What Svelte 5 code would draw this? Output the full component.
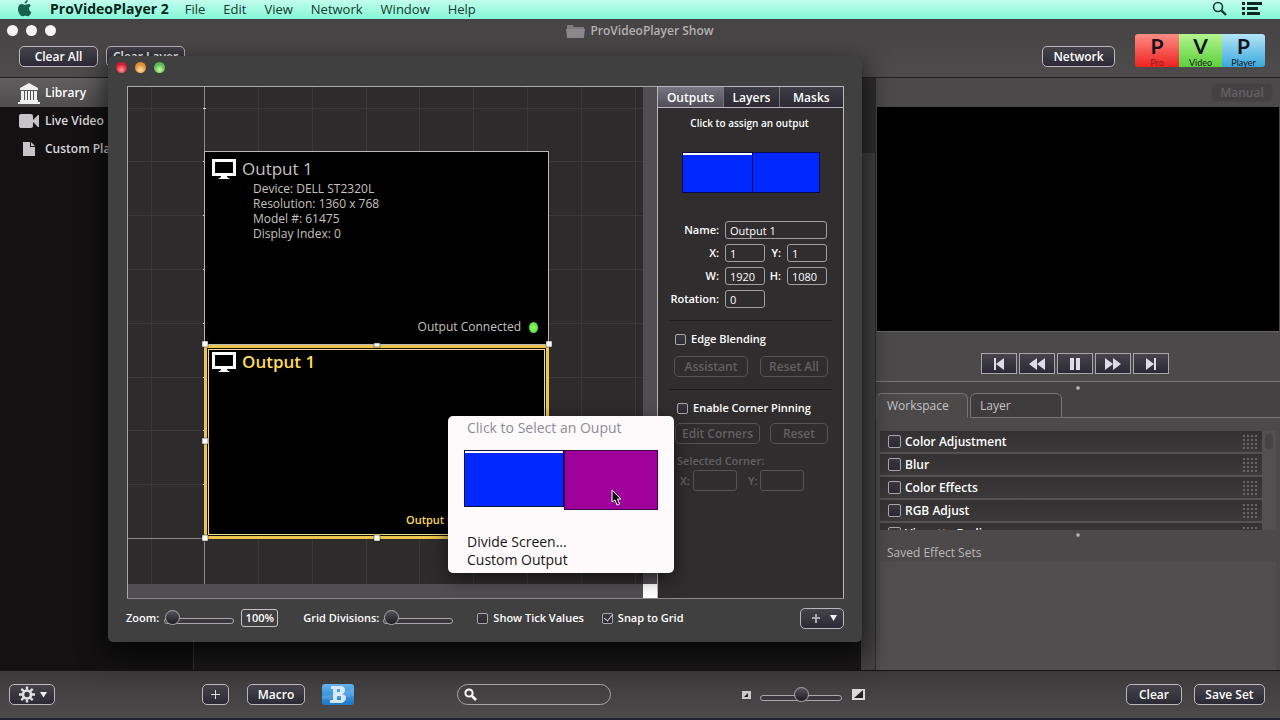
<script>
  const menus = ['File', 'Edit', 'View', 'Network', 'Window', 'Help'];
  const effects = ['Color Adjustment', 'Blur', 'Color Effects', 'RGB Adjust', 'Vignette Radius'];
  const logo = [
    { letter: 'P', word: 'Pro', tone: 'red' },
    { letter: 'V', word: 'Video', tone: 'green' },
    { letter: 'P', word: 'Player', tone: 'blue' }
  ];
  const details = ['Device: DELL ST2320L', 'Resolution: 1360 x 768', 'Model #: 61475', 'Display Index: 0'];
  const transport = [
    { name: 'Previous', d: 'M4 3h2v12H4zM14 3v12L6 9z' },
    { name: 'Rewind', d: 'M9 3v12L1 9zM17 3v12L9 9z' },
    { name: 'Pause', d: 'M4 3h4v12H4zM10 3h4v12h-4z' },
    { name: 'Forward', d: 'M1 3v12l8-6zM9 3v12l8-6z' },
    { name: 'Next', d: 'M12 3h2v12h-2zM4 3v12l8-6z' }
  ];
  const columns = [23, 130, 184, 238, 291, 345, 399, 453, 507];
  const lines = [21, 74, 128, 182, 236, 290, 343, 397];

  let snap = $state(true);
  let ticks = $state(false);
  let zoom = $state(0);
  let divisions = $state(0);
  let thumbs = $state(50);
</script>

{#snippet monitor()}
  <svg class="monitor" viewBox="0 0 24 20" width="24" height="20" aria-hidden="true">
    <path d="M0 0h24v17H0zM3 3v11h18V3z" fill="#fff" fill-rule="evenodd" />
    <path d="M9 17h6v1l3 2H6l3-2z" fill="#fff" />
  </svg>
{/snippet}

{#snippet grip()}
  <svg class="grip" width="15" height="14" viewBox="0 0 15 14" aria-hidden="true">
    {#each [0, 4, 8, 12] as y}
      {#each [0, 4, 8, 12] as x}
        <rect {x} {y} width="2" height="2" fill="#676567" />
      {/each}
    {/each}
  </svg>
{/snippet}

<div class="screen">
  <nav class="menubar">
    <button class="apple" aria-label="Apple menu">
      <svg width="16" height="17" viewBox="0 0 16 17">
        <path d="M10.8 0c.1 1.900-1.500 3.600-3.200 3.500C7.400 1.800 9.100.1 10.800 0zM13.900 5.500c-1.300.8-1.900 1.900-1.800 3.200.1 1.500.9 2.600 2.300 3.200-.7 2.300-2.200 4.300-3.600 4.400-1 0-1.400-.6-2.600-.6s-1.700.6-2.600.6C3.600 16.300 1 12.500 1 8.900c0-3.200 2-4.900 3.900-4.900 1.300 0 2.200.8 3.200.8.900 0 1.800-.9 3.400-.9 1 0 1.900.6 2.400 1.600z" fill="#17624f" />
      </svg>
    </button>
    <button class="app">ProVideoPlayer 2</button>
    {#each menus as item}
      <button>{item}</button>
    {/each}
    <span class="grow"></span>
    <button class="icon" aria-label="Search">
      <svg width="15" height="15" viewBox="0 0 15 15" fill="none" stroke="#143a30">
        <circle cx="6" cy="6" r="4.500" stroke-width="1.600" />
        <path d="M9.300 9.300L14 14" stroke-width="2.400" />
      </svg>
    </button>
    <button class="icon" aria-label="Notifications">
      <svg width="20" height="13" viewBox="0 0 20 13" fill="#0d2620">
        <path d="M0 0h3v3H0zM0 5h3v3H0zM0 10h3v3H0zM5 0h15v3H5zM5 5h11v3H5zM5 10h13v3H5z" />
      </svg>
    </button>
  </nav>

  <header class="top">
    <div class="left">
      <div class="lights"><i></i><i></i><i></i></div>
      <div class="clears">
        <button class="btn">Clear All</button>
        <button class="btn">Clear Layer</button>
      </div>
    </div>
    <h1>
      <svg width="19" height="15" viewBox="0 0 19 15" aria-hidden="true">
        <path d="M1 2q0-1 1-1h5l1 2h9q1 0 1 1v9q0 1-1 1H2q-1 0-1-1z" fill="#7c7a7c" />
        <path d="M0 5h19l-1 8q0 1-1 1H2q-1 0-1-1z" fill="#8b898b" />
      </svg>
      ProVideoPlayer Show
    </h1>
    <div class="right">
      <button class="btn">Network</button>
      <div class="logo">
        {#each logo as part}
          <div class={part.tone}><b>{part.letter}</b><span>{part.word}</span></div>
        {/each}
      </div>
    </div>
  </header>

  <main>
    <aside class="library">
      <a class="on" href="#library">
        <svg width="22" height="22" viewBox="0 0 22 22" fill="#eee">
          <path d="M11 1l9 5v2H2V6zM3 9h3v9H3zM7 9h2v9H7zM10 9h2v9h-2zM13 9h2v9h-2zM16 9h3v9h-3zM2 18h18v2H2zM0 20h22v2H0z" />
        </svg>
        Library
      </a>
      <a href="#live">
        <svg width="22" height="22" viewBox="0 0 22 22" fill="#c6c4c6">
          <rect x="1" y="4" width="14" height="14" rx="2" />
          <path d="M15 10l5-5h1v12h-1l-5-5z" />
        </svg>
        Live Video
      </a>
      <a href="#custom">
        <svg width="22" height="22" viewBox="0 0 22 22" fill="#c6c4c6">
          <path d="M5 4h7v5h5v9H5z" />
          <path d="M13 4l4 4h-4z" />
        </svg>
        Custom Playlist
      </a>
    </aside>
    <section class="media" aria-label="Media"></section>
    <div class="gutter"><i></i></div>
    <section class="side">
      <div class="manual"><button class="btn off" disabled>Manual</button></div>
      <div class="preview"></div>
      <div class="transport">
        {#each transport as control}
          <button aria-label={control.name}>
            <svg width="18" height="18" viewBox="0 0 18 18"><path d={control.d} fill="#dedce6" /></svg>
          </button>
        {/each}
      </div>
      <div class="split"><i></i></div>
      <div class="tabs">
        <button class="on">Workspace</button>
        <button>Layer</button>
        <span></span>
      </div>
      <div class="effects">
        <ul>
          {#each effects as effect}
            <li>
              <label><input type="checkbox" />{effect}</label>
              {@render grip()}
            </li>
          {/each}
        </ul>
        <div class="bar"><i></i></div>
      </div>
      <div class="split low"><i></i></div>
      <h2>Saved Effect Sets</h2>
      <div class="sets"></div>
    </section>
  </main>

  <footer class="bottom">
    <button class="btn" aria-label="Actions">
      <svg width="32" height="17" viewBox="0 0 32 17">
        <g stroke="#e4e2e6" fill="none">
          <circle cx="8" cy="8.500" r="4" stroke-width="2.600" />
          <path d="M8 0.500v3M8 13.500v3M0 8.500h3M13 8.500h3M2.300 2.800l2.200 2.200M11.500 12l2.200 2.200M2.300 14.200l2.200-2.200M11.500 5l2.200-2.200" stroke-width="2.400" />
        </g>
        <path d="M21 6h7l-3.500 5.500z" fill="#f2f0f4" />
      </svg>
    </button>
    <button class="btn add" aria-label="Add">
      <svg width="9" height="9" viewBox="0 0 9 9"><path d="M4 0h1v4h4v1H5v4H4V5H0V4h4z" fill="#ddd" /></svg>
    </button>
    <button class="btn">Macro</button>
    <button class="bible" aria-label="Bible">
      <svg width="32" height="21" viewBox="0 0 32 21">
        <path d="M9 2h11q3 1 3 4t-3 4q4 1 4 4t-4 5H8v-3h3V5H9zM15 5v3h3V5zM15 12v4h4v-4z" fill="#d4e8fa" fill-rule="evenodd" />
        <path d="M0 12q15-1 32-8v8q-16 4-32 3z" fill="#fff" opacity=".12" />
      </svg>
    </button>
    <label class="search">
      <svg width="13" height="13" viewBox="0 0 13 13" fill="none" stroke="#fff">
        <circle cx="5" cy="5" r="3.600" stroke-width="2" /><path d="M8 8l4 4" stroke-width="2.600" />
      </svg>
      <input type="text" aria-label="Search media" />
    </label>
    <span class="grow"></span>
    <svg width="9" height="8" viewBox="0 0 9 8" aria-hidden="true"><path d="M0 0h9v8H0z" fill="#cbc9cb" /><path d="M2 6l4-4v4z" fill="#222" /></svg>
    <input class="long" type="range" aria-label="Thumbnail size" bind:value={thumbs} />
    <svg width="13" height="11" viewBox="0 0 13 11" aria-hidden="true"><path d="M0 0h13v11H0z" fill="#dad8da" /><path d="M2 9l9-8v8z" fill="#222" /></svg>
    <div class="save">
      <button class="btn">Clear</button>
      <button class="btn">Save Set</button>
    </div>
  </footer>

  <div class="dialog" role="dialog" aria-label="Output layout">
    <div class="lights colour"><i class="r"></i><i class="o"></i><i class="g"></i></div>
    <div class="body">
      <div class="stage">
        <div class="canvas">
          <svg class="grid" width="515" height="497" viewBox="0 0 515 497" shape-rendering="crispEdges" aria-hidden="true">
            {#each columns as x}<rect {x} y="0" width="1" height="497" fill="#3a383a" />{/each}
            {#each lines as y}<rect x="0" {y} width="515" height="1" fill="#3a383a" />{/each}
            <rect x="76" y="0" width="1" height="497" fill="#8b898b" />
            <rect x="0" y="451" width="515" height="1" fill="#8b898b" />
            {#each lines as y}<rect x="75" {y} width="3" height="1" fill="#ddd" />{/each}
          </svg>
          <article class="output first">
            <h3>{@render monitor()}Output 1</h3>
            <ul>
              {#each details as line}<li>{line}</li>{/each}
            </ul>
            <p>Output Connected <i></i></p>
          </article>
          <article class="output second">
            <h3>{@render monitor()}Output 1</h3>
            <p>Output Disconnected <i></i></p>
          </article>
          <svg class="handles" width="352" height="202" viewBox="0 0 352 202" aria-hidden="true">
            <g fill="#fff" stroke="#222" stroke-width=".5">
              <rect x="1" y="1" width="6" height="6" /><rect x="173" y="3" width="6" height="4" /><rect x="345" y="1" width="6" height="6" />
              <rect x="1" y="98" width="6" height="6" />
              <rect x="1" y="195" width="6" height="6" /><rect x="173" y="195" width="6" height="6" />
            </g>
          </svg>
        </div>
        <div class="vbar"></div>
        <div class="hbar"></div>
        <div class="corner"></div>
      </div>
      <div class="panel">
        <div class="ptabs">
          <button class="on">Outputs</button><button>Layers</button><button>Masks</button>
        </div>
        <p class="hint">Click to assign an output</p>
        <div class="displays">
          <button class="lit" aria-label="Display 1"></button><button aria-label="Display 2"></button>
        </div>
        <div class="fields">
          <label for="name">Name:</label><input id="name" class="wide" value="Output 1" />
          <label for="x">X:</label><input id="x" value="1" />
          <label for="y">Y:</label><input id="y" value="1" />
          <label for="w">W:</label><input id="w" value="1920" />
          <label for="h">H:</label><input id="h" value="1080" />
          <label for="rot">Rotation:</label><input id="rot" value="0" />
        </div>
        <hr />
        <label class="check"><input type="checkbox" />Edge Blending</label>
        <div class="pair">
          <button class="btn off" disabled>Assistant</button>
          <button class="btn off" disabled>Reset All</button>
        </div>
        <hr />
        <label class="check pin"><input type="checkbox" />Enable Corner Pinning</label>
        <div class="pair tight">
          <button class="btn off" disabled>Edit Corners</button>
          <button class="btn off" disabled>Reset</button>
        </div>
        <p class="dim">Selected Corner:</p>
        <div class="xy">
          <label for="cx">X:</label><input id="cx" disabled />
          <label for="cy">Y:</label><input id="cy" disabled />
        </div>
      </div>
    </div>
    <div class="tools">
      <label for="zoom">Zoom:</label>
      <input id="zoom" type="range" bind:value={zoom} />
      <button class="pct">100%</button>
      <label class="gd" for="divs">Grid Divisions:</label>
      <input id="divs" type="range" bind:value={divisions} />
      <label class="check tick"><input type="checkbox" bind:checked={ticks} />Show Tick Values</label>
      <label class="check"><input type="checkbox" bind:checked={snap} />Snap to Grid</label>
      <span class="grow"></span>
      <button class="btn" aria-label="Add output">
        <svg width="26" height="9" viewBox="0 0 26 9"><path d="M4 0h2v3h3v2H6v4H4V5H1V3h3z" fill="#aaa8ac" /><path d="M19 1h7l-3.500 6z" fill="#f2f0f4" /></svg>
      </button>
    </div>
  </div>

  <div class="popup" role="menu">
    <p>Click to Select an Ouput</p>
    <div class="picks">
      <button class="one" aria-label="Display 1"></button>
      <button class="two" aria-label="Display 2"></button>
    </div>
    <button class="item" role="menuitem">Divide Screen...</button>
    <button class="item" role="menuitem">Custom Output</button>
    <svg class="cursor" width="12" height="17" viewBox="0 0 12 17" aria-hidden="true">
      <path d="M1 1v12l3-2 2 5 2.500-1-2-5H10z" fill="#111" stroke="#fff" />
    </svg>
  </div>
</div>

<style>
  :global(body) { margin: 0; background: #121011; }
  .screen, .screen :global(*) { box-sizing: border-box; }
  .screen {
    position: relative;
    display: flex;
    flex-direction: column;
    min-height: 100vh;
    overflow: hidden;
    color: #fff;
    font: 12px/16px "Open Sans", "Noto Sans", sans-serif;
  }
  button, input { font: inherit; color: inherit; margin: 0; }
  button { background: none; border: 0; padding: 0; }
  h1, h2, h3, p, ul { margin: 0; padding: 0; list-style: none; }
  svg { flex: none; display: block; }
  .grow { flex: 1; }

  .menubar {
    display: flex;
    align-items: center;
    height: 19px;
    padding: 0 18px 2px 17px;
    gap: 18px;
    color: #12382f;
    font-size: 13px;
    font-weight: 500;
    background: linear-gradient(#c2fdec, #85f8d5);
  }
  .menubar .app { margin-right: -2px; font-size: 14px; font-weight: 700; color: #06241c; }
  .menubar .apple { margin-right: -1px; }
  .menubar .icon { margin-left: -3px; }

  .top {
    display: grid;
    grid-template-columns: 1fr auto 1fr;
    height: 59px;
    background: linear-gradient(#454344, #4d4b4c);
    border-bottom: 1px solid #222;
  }
  .lights { display: flex; gap: 8px; padding: 6px 0 0 7px; }
  .lights i { width: 11px; height: 11px; border-radius: 50%; background: #f6f4f6; }
  .clears { display: flex; gap: 8px; padding: 10px 0 0 19px; }
  .btn {
    height: 21px;
    padding: 0 13px;
    border: 1px solid #b9b7bb;
    border-radius: 5px;
    background: linear-gradient(#454349, #2c2a35);
    font-weight: 600;
    line-height: 18px;
    white-space: nowrap;
    display: inline-flex;
    align-items: center;
    justify-content: center;
  }
  .btn.off { color: #626062; border-color: #545254; background: none; }
  .clears .btn { padding: 0; width: 79px; }
  h1 { display: flex; gap: 5px; align-items: center; height: 24px; font-size: 12px; font-weight: 600; color: #b4b2b4; }
  .right { display: flex; justify-content: flex-end; padding: 15px 15px 0 0; gap: 20px; }
  .right .btn { width: 73px; margin-top: 12px; padding: 0; }
  .logo { display: flex; height: 33px; color: #141420; }
  .logo div { width: 43px; display: flex; flex-direction: column; align-items: center; }
  .logo .red { width: 44px; border-radius: 3px 0 0 3px; }
  .logo .blue { border-radius: 0 3px 3px 0; }
  .logo b { font: 700 21px/24px "Lato", sans-serif; }
  .logo span { font: 9px/9px "Lato", sans-serif; }
  .red { background: linear-gradient(#ff8d85, #ee2220); }
  .red span { color: #9c1a18; }
  .green { background: linear-gradient(#b3f58f, #5dcf3c); }
  .blue { background: linear-gradient(#b5e4f7, #38a9dc); }

  main { display: flex; flex: 1; min-height: 592px; }
  .library { width: 194px; background: #131112; border-right: 1px solid #333133; }
  .library a {
    display: flex;
    align-items: center;
    gap: 5px;
    height: 28px;
    padding-left: 18px;
    color: #dcdadc;
    font-weight: 600;
    text-decoration: none;
    white-space: nowrap;
  }
  .library .on { height: 29px; color: #fff; background: linear-gradient(#615f60, #4f4d4e); }
  .media { flex: 1; background: #181617; }
  .gutter { width: 15px; background: #434142; border-right: 1px solid #2b292a; }
  .gutter i { display: block; height: 75px; background: #302e2f; }
  .side { width: 404px; display: flex; flex-direction: column; background: #4b494a; }
  .manual { display: flex; justify-content: flex-end; height: 29px; padding: 5px 7px 0 0; }
  .manual .btn { height: 19px; width: 62px; padding: 0; background: #434142; border-color: #484647; }
  .preview { height: 225px; margin: 0 1px; background: #000; border-bottom: 1px solid #666; }
  .transport { display: flex; justify-content: center; gap: 2px; height: 49px; padding: 21px 0 0; margin-right: 7px; }
  .transport button {
    display: flex;
    align-items: center;
    justify-content: center;
    width: 36px;
    height: 21px;
    border: 1px solid #a8a6aa;
    background: linear-gradient(#464449, #2b2935);
  }
  .split { height: 12px; padding-top: 4px; border-top: 1px solid #777577; background: #444243; }
  .split i { display: block; width: 4px; height: 4px; margin: 0 auto; border-radius: 50%; background: radial-gradient(#d5d3d5, #6b696b); }
  .tabs { display: flex; height: 25px; background: #444243; color: #c6c4c6; }
  .tabs button {
    width: 92px;
    padding: 0 0 0 10px;
    text-align: left;
    border: 1px solid #777577;
    border-radius: 6px 6px 0 0;
    background: #3d3b3c;
  }
  .tabs .on { border-bottom-color: #4b494a; border-left-color: #5a585a; background: #4b494a; margin-right: 2px; }
  .tabs button:not(.on) { padding-left: 9px; }
  .tabs span { flex: 1; border-bottom: 1px solid #777577; }
  .effects { display: flex; height: 112px; margin: 0 4px; padding-top: 13px; }
  .effects ul { flex: 1; display: flex; flex-direction: column; gap: 2px; overflow: hidden; background: #545253; }
  .effects li { display: flex; flex: none; align-items: center; justify-content: space-between; height: 21px; padding: 0 4px 0 8px; background: linear-gradient(#333132, #3b393a); }
  .effects label { display: flex; align-items: center; gap: 4px; font-weight: 600; font-size: 12px; }
  .bar { width: 14px; padding: 3px; background: #525051; }
  .bar i { display: block; height: 15px; border-radius: 4px; background: #454344; }
  .low { border: 0; background: none; padding-top: 3px; }
  h2 { height: 20px; padding-left: 11px; font-size: 12px; line-height: 22px; font-weight: 500; color: #bab8ba; }
  .sets { flex: 1; margin: 0 4px; background: #504e4f; }

  input[type='checkbox'] {
    appearance: none;
    flex: none;
    width: 11px;
    height: 11px;
    border: 1px solid #a9a7ab;
    border-radius: 2px;
    background: linear-gradient(#3b393d, #2b2933);
  }
  .effects input[type='checkbox'] { width: 13px; height: 13px; }
  input[type='checkbox']:checked::before {
    content: '';
    display: block;
    width: 4px;
    height: 8px;
    margin: -2px 0 0 3px;
    border: solid #d4d2d6;
    border-width: 0 1px 1px 0;
    transform: rotate(38deg);
  }
  input[type='range'] { appearance: none; width: 70px; height: 16px; background: none; }
  input[type='range']::-webkit-slider-runnable-track {
    height: 6px;
    border: 1px solid #a9a7ab;
    border-radius: 3px;
    background: #3a383c;
  }
  input[type='range']::-webkit-slider-thumb {
    appearance: none;
    width: 15px;
    height: 15px;
    margin-top: -9px;
    border: 1px solid #a9a7ab;
    border-radius: 50%;
    background: linear-gradient(#55535a, #1d1b22);
  }
  .tools input[type='range'], .bottom input[type='range'] { padding-top: 6px; }

  .bottom {
    display: flex;
    align-items: center;
    height: 50px;
    padding: 0 15px 0 9px;
    background: linear-gradient(#3b393a, #4c4a4b);
    border-top: 1px solid #151315;
    border-bottom: 2px solid #23222f;
  }
  .bottom > .btn:first-child { width: 46px; padding: 0 0 0 6px; }
  .bottom .add { width: 27px; padding: 0; margin: 0 18px 0 147px; }
  .bottom .add + .btn { width: 58px; padding: 0; }
  .bible { height: 21px; margin: 0 103px 0 17px; border-radius: 3px; overflow: hidden; background: linear-gradient(#62b2ee, #1f78c8); }
  .search { display: flex; align-items: center; width: 154px; height: 21px; padding-left: 6px; border: 1px solid #a9a7ab; border-radius: 11px; }
  .search input { flex: 1; min-width: 0; background: none; border: 0; outline: 0; }
  .bottom .long { width: 82px; margin: 0 10px 0 9px; }
  .save { display: flex; justify-content: flex-end; gap: 12px; width: 400px; }
  .save .btn { padding: 0; width: 56px; }
  .save .btn + .btn { width: 71px; }

  .dialog {
    position: absolute;
    left: 108px;
    top: 56px;
    width: 754px;
    border-radius: 5px;
    background: #414041;
    box-shadow: 0 10px 26px 4px rgba(0, 0, 0, .6);
    font-size: 11px;
    font-weight: 600;
  }
  .dialog .lights { height: 30px; padding: 6px 0 0 8px; }
  .lights .r { background: radial-gradient(circle at 50% 70%, #ff9a9a, #d81735 60%); }
  .lights .o { background: radial-gradient(circle at 50% 70%, #ffe09a, #dd8b34 60%); }
  .lights .g { background: radial-gradient(circle at 50% 70%, #c8ffa8, #56b850 60%); }
  .body { display: flex; height: 513px; margin: 0 18px 0 19px; border-bottom: 1px solid #8b898b; }
  .stage {
    flex: 1;
    display: grid;
    grid-template: 1fr 14px / 1fr 14px;
    border: solid #aaa8aa;
    border-width: 1px 0 0 1px;
  }
  .canvas { position: relative; overflow: hidden; background: #2d2b2c; }
  .vbar, .hbar { background: #504e50; }
  .corner { background: #fff; }
  .output { position: absolute; left: 76px; width: 345px; background: #000; border: 1px solid #b9b7b9; color: #c6c2bf; font-weight: 500; font-size: 12px; }
  .first { top: 64px; height: 194px; }
  .second {
    top: 258px;
    height: 194px;
    border: 3px solid #ecc64b;
    color: #ffdb5c;
    font-weight: 600;
    box-shadow: inset 0 0 0 1px #111, inset 0 0 0 2px #f0dc8c;
  }
  .output h3 { display: flex; gap: 6px; align-items: center; height: 20px; margin: 7px 0 0 7px; font-size: 17px; line-height: 20px; font-weight: inherit; }
  .second h3 { margin: 4px 0 0 5px; }
  .output ul { padding: 2px 0 0 48px; line-height: 15px; }
  .output p { position: absolute; right: 10px; bottom: 9px; display: flex; align-items: center; gap: 8px; }
  .second p { bottom: 8px; font-size: 11px; }
  .output p i { width: 9px; height: 11px; border-radius: 50%; background: radial-gradient(#9cff6a, #38d327); }
  .grid { position: absolute; left: 0; top: 0; }
  .handles { position: absolute; left: 73px; top: 253px; }

  .panel { width: 187px; border: 1px solid #b9b7b9; border-bottom: 0; background: #2f2d2e; }
  .ptabs { display: flex; height: 21px; border-bottom: 1px solid #b9b7b9; font-size: 12px; }
  .ptabs button { flex: 64; padding-top: 1px; border-right: 1px solid #777577; background: linear-gradient(#3e3c45, #2b2933); }
  .ptabs .on { flex: 66; background: linear-gradient(#77757f, #4f4d57); }
  .ptabs button:nth-child(2) { flex: 55; }
  .ptabs button:last-child { border: 0; }
  .hint { padding: 7px 2px 7px 0; text-align: center; font-size: 10px; line-height: 17px; }
  .displays { display: flex; height: 41px; margin: 13px 23px 0 24px; }
  .displays button { flex: 67; background: #0028ff; border: 1px solid #0a0a50; }
  .displays .lit { flex: 71; border-width: 1px 0 1px 1px; box-shadow: inset 0 2px #fff; }
  .fields { display: grid; grid-template-columns: 62px 40px 22px 40px; grid-auto-rows: 18px; row-gap: 5px; margin-left: 5px; padding-top: 28px; }
  .fields label { padding-right: 6px; text-align: right; line-height: 18px; }
  .fields input, .xy input {
    width: 40px;
    min-width: 0;
    margin: 0;
    padding: 1px 4px 0;
    border: 1px solid #a19fa1;
    border-radius: 3px;
    background: none;
    font-weight: 500;
  }
  .fields .wide { grid-column: 2 / 5; width: 102px; }
  #rot { grid-column: 2; }
  hr { height: 1px; margin: 12px 11px 10px; border: 0; background: #1d1b1c; }
  .check { display: flex; align-items: center; gap: 5px; height: 16px; }
  .panel .check { margin-left: 17px; }
  .panel .pin { margin-left: 19px; }
  .pair { display: flex; justify-content: space-between; margin: 9px 15px 0 16px; }
  .pair .btn { width: 74px; padding: 0; font-size: 12px; }
  .pair .btn + .btn { width: 68px; }
  .tight { margin: 7px 15px 0 17px; }
  .tight .btn { width: 85px; }
  .tight .btn + .btn { width: 58px; }
  .dim, .xy { color: #626062; }
  .dim { padding: 9px 0 1px 19px; }
  .xy { display: flex; gap: 3px; align-items: center; padding-left: 22px; }
  .xy input { width: 44px; height: 21px; border-color: #545254; margin-right: 8px; }

  .tools { display: flex; align-items: center; height: 43px; padding: 0 18px 5px; }
  .tools #zoom { margin: 0 7px 0 5px; }
  .pct { width: 37px; height: 18px; border: 1px solid #c4c2c4; border-radius: 3px; line-height: 16px; }
  .gd { margin: 0 4px 0 25px; }
  .tick { margin: 0 18px 0 24px; }
  .tools .btn { width: 44px; padding: 0 0 0 4px; }

  .popup {
    position: absolute;
    left: 448px;
    top: 416px;
    width: 226px;
    height: 157px;
    padding: 3px 16px 0;
    border-radius: 5px;
    background: #fefafb;
    color: #171517;
    box-shadow: 0 5px 18px rgba(0, 0, 0, .55);
    font-size: 14px;
    line-height: 18px;
  }
  .popup p { padding-left: 3px; color: #8d8b96; }
  .picks { display: flex; align-items: flex-start; height: 60px; margin: 13px 0 23px; }
  .one { width: 100px; height: 57px; background: #0028ff; border: 1px solid #101040; box-shadow: inset 0 2px #fff; }
  .two { width: 94px; height: 60px; background: #a0009c; border: 1px solid #3a0040; }
  .item { display: block; padding-left: 3px; }
  .cursor { position: absolute; left: 163px; top: 73px; }
</style>
